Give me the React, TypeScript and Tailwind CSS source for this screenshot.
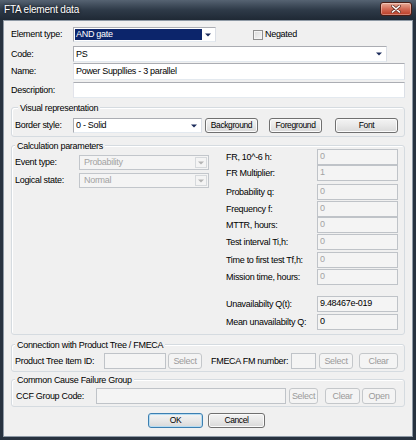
import type { ReactNode } from 'react'

const font = "font-['Liberation_Sans',Arial,sans-serif] text-[9px] tracking-[-0.3px] leading-none"

function Arrow({ color = '#1b2b5b' }: { color?: string }) {
  return (
    <svg width="6" height="4" viewBox="0 0 6 4" className="shrink-0">
      <path d="M0 0.5h6L3 3.5z" fill={color} />
    </svg>
  )
}

function Edit({ className, value = '', disabled = false, grey = false }: { className: string; value?: string; disabled?: boolean; grey?: boolean }) {
  if (disabled || grey) {
    return (
      <div className={`${className} flex items-start border border-[#bfc3c8] bg-[#f4f4f4] pl-[2px] pt-[2px] ${disabled ? 'text-[#a3a3a3]' : 'text-black'}`}>
        {value}
      </div>
    )
  }
  return (
    <div className={`${className} flex items-center border border-[#abadb3] border-l-[#e2e3ea] border-b-[#e3e9ef] border-r-[#dbdfe6] bg-white pl-[2px]`}>
      {value}
    </div>
  )
}

function Combo({ className, value, selected = false, disabled = false }: { className: string; value: string; selected?: boolean; disabled?: boolean }) {
  if (disabled) {
    return (
      <div className={`${className} flex items-stretch border border-[#c2c6cb] bg-[#f4f4f4] p-[1px]`}>
        <span className="flex flex-1 items-center pl-[3px] text-[#a3a3a3]">{value}</span>
        <span className="flex w-[12px] items-center justify-center border border-[#d6d9dc] bg-[#f4f4f4]">
          <Arrow color="#b3b3b3" />
        </span>
      </div>
    )
  }
  return (
    <div className={`${className} flex items-stretch border border-[#abadb3] border-b-[#e3e9ef] border-r-[#dbdfe6] bg-white p-[1px]`}>
      <span className={`flex flex-1 items-center pl-[1px] ${selected ? 'bg-[#0c256b] text-white' : ''}`}>{value}</span>
      <span className="flex w-[12px] items-center justify-center">
        <Arrow />
      </span>
    </div>
  )
}

function Button({ className, label, disabled = false, def = false }: { className: string; label: string; disabled?: boolean; def?: boolean }) {
  if (disabled) {
    return (
      <div className={`${className} flex h-[16px] items-center justify-center rounded-[3px] border border-[#c4c7ca] bg-[#f4f4f4] text-[#9a9a9a]`}>
        {label}
      </div>
    )
  }
  return (
    <div
      className={`${className} flex h-full items-center justify-center rounded-[3px] border bg-gradient-to-b from-[#f4f4f4] via-[#e8e8e8] to-[#d9d9d9] text-[8.5px] tracking-[-0.4px] text-black ${
        def ? 'border-[#3c7fb1] shadow-[inset_0_0_0_1px_#b6dcf2]' : 'border-[#707070] shadow-[inset_0_0_0_1px_#fbfbfb]'
      }`}
    >
      {label}
    </div>
  )
}

function Group({ title, className, labelClass, children }: { title: string; className: string; labelClass: string; children: ReactNode }) {
  return (
    <div className={`relative mr-[2px] rounded-[3px] border border-[#d5dbe0] shadow-[inset_1px_1px_0_#fff] ${className}`}>
      <span className={`absolute top-[-4px] bg-[#f0f0f0] px-[2px] ${labelClass}`}>{title}</span>
      {children}
    </div>
  )
}

const params: { label: string; value: string; mt: string; grey?: boolean }[] = [
  { label: 'FR, 10^-6 h:', value: '0', mt: 'mt-[3px]' },
  { label: 'FR Multiplier:', value: '1', mt: 'mt-0' },
  { label: 'Probability q:', value: '0', mt: 'mt-[3px]' },
  { label: 'Frequency f:', value: '0', mt: 'mt-[1px]' },
  { label: 'MTTR, hours:', value: '0', mt: 'mt-0' },
  { label: 'Test interval Ti,h:', value: '0', mt: 'mt-[1px]' },
  { label: 'Time to first test Tf,h:', value: '0', mt: 'mt-[2px]' },
  { label: 'Mission time, hours:', value: '0', mt: 'mt-[1px]' },
  { label: 'Unavailabilty Q(t):', value: '9.48467e-019', mt: 'mt-[11px]', grey: true },
  { label: 'Mean unavailabilty Q:', value: '0', mt: 'mt-[2px]', grey: true },
]

export default function App() {
  return (
    <div className={`flex h-[440px] w-[416px] flex-col bg-[#27323f] ${font}`}>
      {/* Title bar */}
      <div className="flex h-[20px] shrink-0 items-center bg-gradient-to-b from-[#566372] via-[#2e3a48] to-[#1f2935] pl-[4px] pr-[4px]">
        <span className="text-[10px] tracking-[-0.2px] text-white [text-shadow:0_0_3px_#000]">FTA element data</span>
        <div className="flex-1" />
        <div className="mb-[3px] flex h-[14px] w-[32px] items-center justify-center rounded-[3px] border border-[#4a1d14] bg-gradient-to-b from-[#e8ab98] via-[#d26a55] to-[#b93a24] shadow-[inset_0_0_0_1px_rgba(255,255,255,0.35)]">
          <svg width="10" height="8" viewBox="0 0 10 8">
            <path d="M1.5 1l7 6M8.5 1l-7 6" stroke="#6b3328" strokeWidth="3" strokeLinecap="round" />
            <path d="M1.5 1l7 6M8.5 1l-7 6" stroke="#fff" strokeWidth="1.6" strokeLinecap="round" />
          </svg>
        </div>
      </div>

      {/* Body */}
      <div className="mx-[3px] mb-[3px] flex flex-1 flex-col border border-[#8e99a5] bg-[#f0f0f0] pl-[7px] pr-[5px] text-black">
        <div className="mt-[6px] flex h-[15px] items-center">
          <span className="w-[62px]">Element type:</span>
          <Combo className="h-full w-[143px]" value="AND gate" selected />
          <span className="ml-[37px] h-[10px] w-[10px] border border-[#8f8f8f] bg-gradient-to-br from-[#dcdcdc] to-[#f6f6f6] shadow-[inset_0_0_0_1px_#f4f4f4]" />
          <span className="ml-[2px]">Negated</span>
        </div>
        <div className="mt-[4px] flex h-[16px] items-center">
          <span className="w-[62px]">Code:</span>
          <Combo className="h-full w-[314px]" value="PS" />
        </div>
        <div className="mt-[1px] flex h-[17px] items-center">
          <span className="w-[62px]">Name:</span>
          <Edit className="h-full w-[332px]" value="Power Suppllies - 3 parallel" />
        </div>
        <div className="mt-[2px] flex h-[16px] items-center">
          <span className="w-[62px]">Description:</span>
          <Edit className="h-full w-[332px]" />
        </div>

        <Group title="Visual representation" className="mt-[9px] h-[30px] pl-[3px] pt-[10px]" labelClass="left-[6px]">
          <div className="flex h-[15px] items-center">
            <span className="w-[58px]">Border style:</span>
            <Combo className="h-full w-[129px]" value="0 - Solid" />
            <Button className="ml-[3px] w-[53px]" label="Background" />
            <Button className="ml-[11px] w-[53px]" label="Foreground" />
            <Button className="ml-[13px] w-[63px]" label="Font" />
          </div>
        </Group>

        <Group title="Calculation parameters" className="mt-[8px] flex h-[190px] pl-[3px]" labelClass="left-[3px]">
          <div className="flex flex-col pt-[9px]">
            <div className="flex h-[15px] items-center">
              <span className="w-[64px]">Event type:</span>
              <Combo className="h-full w-[130px]" value="Probability" disabled />
            </div>
            <div className="mt-[3px] flex h-[15px] items-center">
              <span className="w-[64px]">Logical state:</span>
              <Combo className="h-full w-[130px]" value="Normal" disabled />
            </div>
          </div>
          <div className="ml-[17px] flex flex-col">
            {params.map((p) => (
              <div key={p.label} className={`flex h-[16px] items-center ${p.mt}`}>
                <span className="w-[91px]">{p.label}</span>
                <Edit className="h-full w-[81px]" value={p.value} disabled={!p.grey} grey={p.grey} />
              </div>
            ))}
          </div>
        </Group>

        <Group title="Connection with Product Tree / FMECA" className="mt-[9px] h-[28px] pl-[3px] pt-[8px]" labelClass="left-[3px]">
          <div className="flex h-[16px] items-center">
            <span className="w-[89px]">Product Tree Item ID:</span>
            <Edit className="h-full w-[62px]" disabled />
            <Button className="ml-[2px] w-[34px]" label="Select" disabled />
            <span className="ml-[9px] w-[80px]">FMECA FM number:</span>
            <Edit className="h-full w-[25px]" disabled />
            <Button className="ml-[3px] w-[34px]" label="Select" disabled />
            <Button className="ml-[6px] w-[39px]" label="Clear" disabled />
          </div>
        </Group>

        <Group title="Common Cause Failure Group" className="mt-[7px] h-[28px] pl-[4px] pt-[8px]" labelClass="left-[3px]">
          <div className="flex h-[16px] items-center">
            <span className="w-[80px]">CCF Group Code:</span>
            <Edit className="h-full w-[190px]" disabled />
            <Button className="ml-[3px] w-[29px]" label="Select" disabled />
            <Button className="ml-[7px] w-[35px]" label="Clear" disabled />
            <Button className="ml-[2px] w-[34px]" label="Open" disabled />
          </div>
        </Group>

        <div className="mt-[6px] flex h-[15px] pl-[137px]">
          <Button className="w-[55px]" label="OK" def />
          <Button className="ml-[5px] w-[57px]" label="Cancel" />
        </div>
      </div>
    </div>
  )
}
